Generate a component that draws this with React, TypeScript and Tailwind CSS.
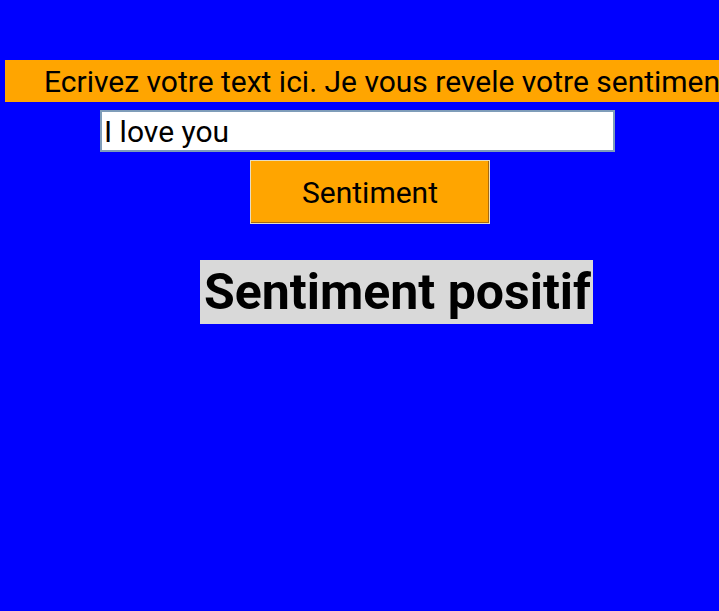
import React from "react";

export default function App() {
  return (
    <div className="h-[611px] w-[719px] overflow-hidden bg-[#0000ff] pt-[60px] font-['Roboto',sans-serif] text-black">
      <div className="ml-[5px] flex h-[42px] w-[900px] items-center whitespace-nowrap bg-[#ffa500] pl-[39px] text-[30px]">
        Ecrivez votre text ici. Je vous revele votre sentiment
      </div>
      <div className="ml-[100px] mt-[8px] flex h-[42px] w-[515px] items-center border-2 border-[#7f9db9] bg-white pl-[2px] text-[30px]">
        I love you
      </div>
      <div className="ml-[250px] mt-[8px] flex h-[64px] w-[240px] items-center justify-center border border-[#e6dcc0] bg-[#ffa500] text-[30px] shadow-[inset_-1px_-1px_0_#a86a10]">
        Sentiment
      </div>
      <div className="ml-[200px] mt-[36px] flex h-[64px] w-fit items-center bg-[#d9d9d9] pl-[4px] pr-[2px] text-[50px] font-bold">
        Sentiment positif
      </div>
    </div>
  );
}
